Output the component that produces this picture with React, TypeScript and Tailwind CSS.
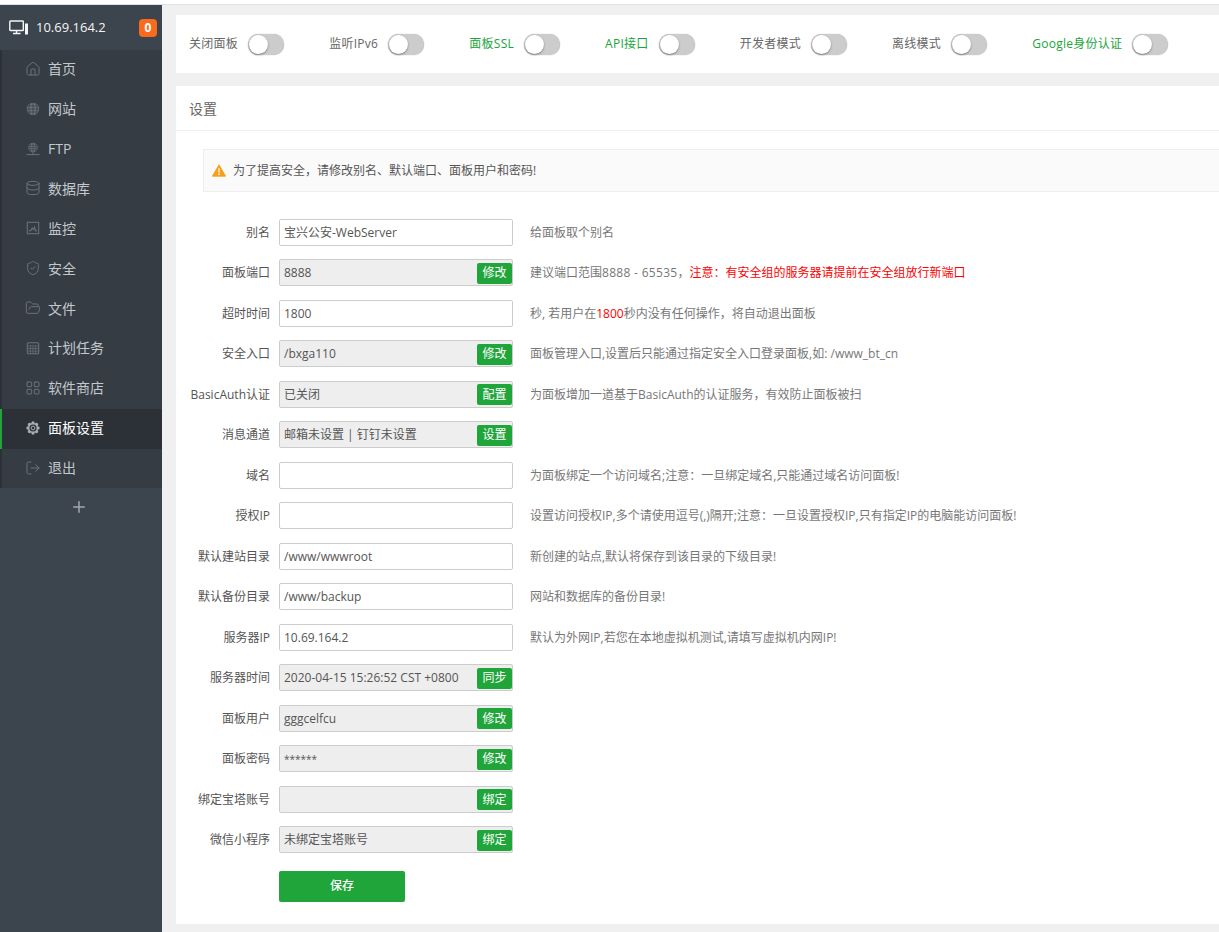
import { Home, Database, ShieldCheck, FolderOpen, LayoutGrid, LogOut, Plus } from 'lucide-react';

const font = 'font-["Open_Sans","Noto_Sans_CJK_SC",sans-serif]';

function GlobeIcon() {
  return (
    <svg viewBox="0 0 14 14" className="h-[14px] w-[14px]" fill="none">
      <circle cx="7" cy="7" r="6.2" fill="currentColor" />
      <path d="M.8 7h12.4M1.6 4h10.8M1.6 10h10.8M7 .8v12.4M4 1.6c-1.4 3.4-1.4 7.4 0 10.8M10 1.6c1.4 3.4 1.4 7.4 0 10.8" stroke="#353c44" strokeWidth="0.7" />
    </svg>
  );
}

function FtpIcon() {
  return (
    <svg viewBox="0 0 14 14" className="h-[14px] w-[14px]" fill="none">
      <circle cx="7" cy="5.6" r="4.8" fill="currentColor" />
      <path d="M2.2 5.6h9.6M2.8 3.4h8.4M2.8 7.8h8.4M7 .8v9.6M4.6 1.4c-1 2.6-1 5.8 0 8.4M9.4 1.4c1 2.6 1 5.8 0 8.4" stroke="#353c44" strokeWidth="0.6" />
      <path d="M7 10.5v2M.5 12.6h13" stroke="currentColor" strokeWidth="1" />
    </svg>
  );
}

function MonitorIcon() {
  return (
    <svg viewBox="0 0 16 16" className="h-[14px] w-[14px]" fill="none" stroke="currentColor" strokeWidth="1.2">
      <rect x="1.5" y="1.5" width="13" height="13" />
      <path d="M3.5 11h2l1.5-3 1.5 2 1.2-3 1.2 4h1.6" />
    </svg>
  );
}

function CalendarIcon() {
  return (
    <svg viewBox="0 0 16 16" className="h-[14px] w-[14px]" fill="none" stroke="currentColor" strokeWidth="1.2">
      <rect x="1.5" y="2" width="13" height="12.5" rx="1.5" />
      <path d="M1.5 5.5h13M1.5 8.5h13M1.5 11.5h13M5 5.5v9M8 5.5v9M11 5.5v9" strokeWidth="0.8" />
    </svg>
  );
}

function GearIcon() {
  return (
    <svg viewBox="0 0 14 14" className="h-[14px] w-[14px]" fill="currentColor">
      <circle cx="7" cy="7" r="5" />
      <circle cx="7" cy="2" r="1.7" />
      <circle cx="7" cy="12" r="1.7" />
      <circle cx="2" cy="7" r="1.7" />
      <circle cx="12" cy="7" r="1.7" />
      <circle cx="3.5" cy="3.5" r="1.7" />
      <circle cx="10.5" cy="3.5" r="1.7" />
      <circle cx="3.5" cy="10.5" r="1.7" />
      <circle cx="10.5" cy="10.5" r="1.7" />
      <circle cx="7" cy="7" r="3.6" fill="#2c3138" />
      <circle cx="7" cy="7" r="1.9" fill="none" stroke="currentColor" strokeWidth="1" />
    </svg>
  );
}

const iconCls = '-ml-px';

const menu = [
  { name: '首页', icon: <Home size={16} strokeWidth={1.5} className={iconCls} /> },
  { name: '网站', icon: <GlobeIcon /> },
  { name: 'FTP', icon: <FtpIcon /> },
  { name: '数据库', icon: <Database size={16} strokeWidth={1.5} className={iconCls} /> },
  { name: '监控', icon: <MonitorIcon /> },
  { name: '安全', icon: <ShieldCheck size={16} strokeWidth={1.5} className={iconCls} /> },
  { name: '文件', icon: <FolderOpen size={16} strokeWidth={1.5} className={iconCls} /> },
  { name: '计划任务', icon: <CalendarIcon /> },
  { name: '软件商店', icon: <LayoutGrid size={16} strokeWidth={1.5} className={iconCls} /> },
  { name: '面板设置', icon: <GearIcon />, active: true },
  { name: '退出', icon: <LogOut size={16} strokeWidth={1.5} className={iconCls} /> },
];

const toggles = [
  { label: '关闭面板' },
  { label: '监听IPv6' },
  { label: '面板SSL', green: true },
  { label: 'API接口', green: true },
  { label: '开发者模式' },
  { label: '离线模式' },
  { label: 'Google身份认证', green: true },
];

type Row = { label: string; value: string; btn?: string; note?: React.ReactNode };

const rows: Row[] = [
  { label: '别名', value: '宝兴公安-WebServer', note: '给面板取个别名' },
  {
    label: '面板端口',
    value: '8888',
    btn: '修改',
    note: (
      <>
        建议端口范围<span className="tracking-[0.3px]">8888 - 65535</span>，<span className="text-[#ff0000]">注意：有安全组的服务器请提前在安全组放行新端口</span>
      </>
    ),
  },
  {
    label: '超时时间',
    value: '1800',
    note: (
      <>
        秒, 若用户在<span className="text-[#ff0000]">1800</span>秒内没有任何操作，将自动退出面板
      </>
    ),
  },
  { label: '安全入口', value: '/bxga110', btn: '修改', note: '面板管理入口,设置后只能通过指定安全入口登录面板,如: /www_bt_cn' },
  { label: 'BasicAuth认证', value: '已关闭', btn: '配置', note: '为面板增加一道基于BasicAuth的认证服务，有效防止面板被扫' },
  { label: '消息通道', value: '邮箱未设置 | 钉钉未设置', btn: '设置' },
  { label: '域名', value: '', note: '为面板绑定一个访问域名;注意：一旦绑定域名,只能通过域名访问面板!' },
  { label: '授权IP', value: '', note: '设置访问授权IP,多个请使用逗号(,)隔开;注意：一旦设置授权IP,只有指定IP的电脑能访问面板!' },
  { label: '默认建站目录', value: '/www/wwwroot', note: '新创建的站点,默认将保存到该目录的下级目录!' },
  { label: '默认备份目录', value: '/www/backup', note: '网站和数据库的备份目录!' },
  { label: '服务器IP', value: '10.69.164.2', note: '默认为外网IP,若您在本地虚拟机测试,请填写虚拟机内网IP!' },
  { label: '服务器时间', value: '2020-04-15 15:26:52 CST +0800', btn: '同步' },
  { label: '面板用户', value: 'gggcelfcu', btn: '修改' },
  { label: '面板密码', value: '******', btn: '修改' },
  { label: '绑定宝塔账号', value: '', btn: '绑定' },
  { label: '微信小程序', value: '未绑定宝塔账号', btn: '绑定' },
];

function Sidebar() {
  return (
    <aside className="flex w-[162px] shrink-0 flex-col bg-[#3c444d]">
      <div className="flex h-[45px] items-center pl-[9px] pr-[5px] text-[#f4f5f6]">
        <svg viewBox="0 0 20 15" className="h-[15px] w-[20px]" fill="none" stroke="currentColor" strokeWidth="1.4">
          <rect x="0.8" y="1" width="13.5" height="9.5" rx="0.6" />
          <path d="M4 13.5h7.5M7.5 10.5v3" />
          <rect x="16" y="3.5" width="3" height="11" fill="currentColor" stroke="none" />
        </svg>
        <span className="ml-[7px] text-[13px]">10.69.164.2</span>
        <span className="ml-auto flex h-[18px] w-[18px] items-center justify-center rounded-[4px] bg-[#f96a1d] text-[12px] font-bold leading-none text-white">
          0
        </span>
      </div>
      <nav className="flex h-[438px] flex-col overflow-hidden bg-[#353c44]">
        {menu.map((item) => (
          <div
            key={item.name}
            className={
              item.active
                ? 'flex h-[39.9px] shrink-0 items-center border-l-2 border-[#20a53a] bg-[#2c3138] pb-[2.4px] pl-[24px] text-white'
                : 'flex h-[39.9px] shrink-0 items-center border-l-2 border-[#2c3138] pb-[2.4px] pl-[24px] text-[#c3c8cc]'
            }
          >
            <span className={item.active ? 'flex w-[22px] text-[#a9adb1]' : 'flex w-[22px] text-[#6c7278]'}>{item.icon}</span>
            <span className="text-[14px]">{item.name}</span>
          </div>
        ))}
      </nav>
      <div className="flex h-[38px] items-center justify-center pr-[4px] text-[#a2a7ac]">
        <Plus size={18} strokeWidth={2} />
      </div>
    </aside>
  );
}

function Toggle({ label, green }: { label: string; green?: boolean }) {
  return (
    <div className="mr-[45px] flex items-center">
      <span className={green ? 'mr-[10px] tracking-[0.28px] text-[#20a53a]' : 'mr-[10px] tracking-[0.28px] text-[#666666]'}>{label}</span>
      <span className="flex h-[21px] w-[36px] items-center rounded-full bg-[#cccccc] shadow-[0_0_1px_#999]">
        <span className="h-[19px] w-[19px] translate-x-px rounded-full bg-white shadow-[0_1px_2px_rgba(0,0,0,0.4)]" />
      </span>
    </div>
  );
}

function FormRow({ label, value, btn, note }: Row) {
  return (
    <div className="flex h-[40.5px] shrink-0 items-start">
      <label className="flex h-[27px] w-[81px] shrink-0 items-center justify-end whitespace-nowrap pt-[0.2px] text-[#555555]">{label}</label>
      <div
        className={
          btn
            ? 'ml-[9px] flex h-[27px] w-[234px] shrink-0 items-center justify-between rounded-[2px] border border-[#cccccc] bg-[#eeeeee] pl-[4px] pt-[0.2px] text-[#555555]'
            : 'ml-[9px] flex h-[27px] w-[234px] shrink-0 items-center rounded-[2px] border border-[#cccccc] bg-white pl-[4px] pt-[0.2px] text-[#555555]'
        }
      >
        <span className={value === '******' ? 'whitespace-nowrap text-[10px]' : 'whitespace-nowrap'}>{value}</span>
        {btn && (
          <span className="flex h-[21px] w-[35px] items-center justify-center rounded-[2px] bg-[#20a53a] text-white">{btn}</span>
        )}
      </div>
      {note && <p className="ml-[17px] flex h-[27px] items-center whitespace-pre pt-[0.2px] text-[#777777]">{note}</p>}
    </div>
  );
}

export default function App() {
  return (
    <div className={`${font} flex h-[932px] w-[1219px] flex-col overflow-hidden bg-white text-[12px]`}>
      <div className="h-[5px] shrink-0 border-b border-[#dde0e4] bg-white" />
      <div className="flex min-h-0 flex-1">
        <Sidebar />
        <main className="flex min-w-0 flex-1 flex-col bg-[#f0f0f0] pb-[8px] pl-[14px] pt-[10px]">
          <section className="flex h-[58px] shrink-0 items-center bg-white pl-[13px]">
            {toggles.map((t) => (
              <Toggle key={t.label} label={t.label} green={t.green} />
            ))}
          </section>
          <section className="mt-[13px] flex min-h-0 flex-1 flex-col bg-white">
            <h2 className="flex h-[45px] shrink-0 items-center border-b border-[#eeeeee] pl-[13px] text-[14px] font-normal text-[#666666]">
              设置
            </h2>
            <div className="flex flex-col pl-[27px] pt-[18px]">
              <div className="flex h-[43px] items-center border border-r-0 border-[#eeeeee] bg-[#fafafa] pl-[8px] text-[#555555]">
                <svg viewBox="0 0 16 14" className="h-[13px] w-[14px]">
                  <path d="M8 0.5 15.6 13.5H0.4Z" fill="#f7a01c" stroke="#f7a01c" strokeLinejoin="round" />
                  <path d="M7.2 4.5h1.6l-.2 5H7.4zM7.2 10.5h1.6v1.6H7.2z" fill="#fff" />
                </svg>
                <span className="ml-[7px]">为了提高安全，请修改别名、默认端口、面板用户和密码!</span>
              </div>
              <div className="-ml-[14px] mt-[26.95px] flex flex-col">
                {rows.map((r) => (
                  <FormRow key={r.label} {...r} />
                ))}
              </div>
              <button className="ml-[76px] mt-[4px] h-[31px] w-[126px] rounded-[2px] bg-[#20a53a] text-[12px] font-medium text-white">
                保存
              </button>
            </div>
          </section>
        </main>
      </div>
    </div>
  );
}
